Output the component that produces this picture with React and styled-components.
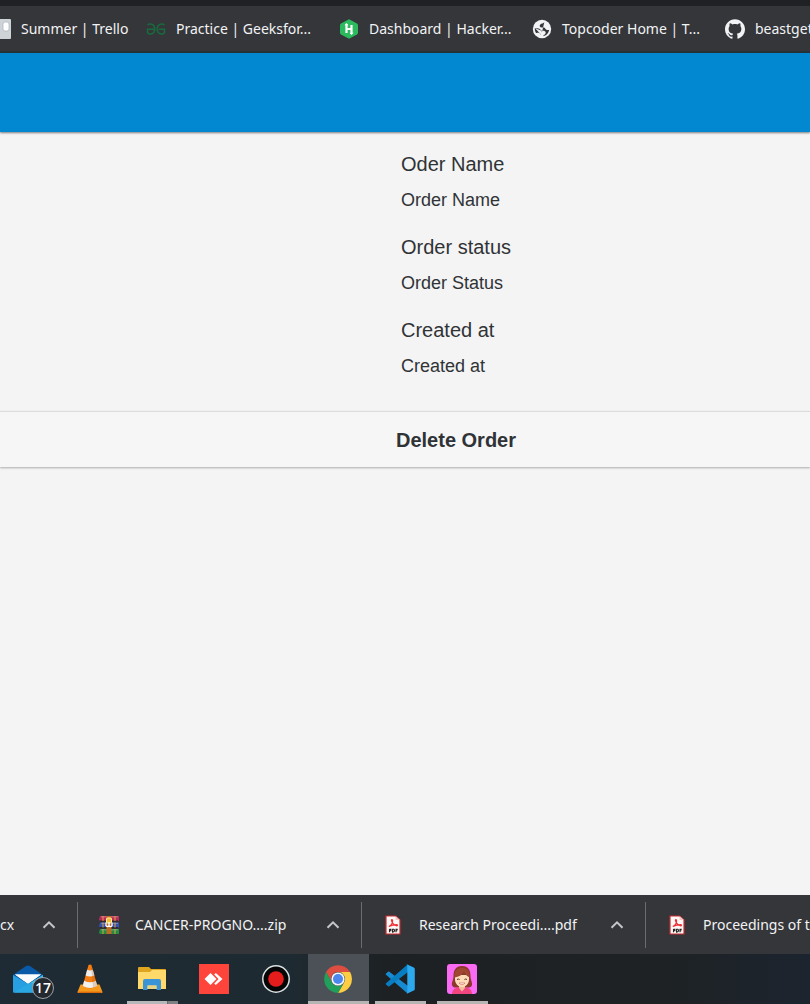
import React from "react";
import styled, { createGlobalStyle } from "styled-components";
import { SiGithub } from "react-icons/si";

const GlobalStyle = createGlobalStyle`
  * { box-sizing: border-box; }
  body { margin: 0; background: #f4f4f4; }
  button { border: 0; padding: 0; margin: 0; background: none; font: inherit; color: inherit; cursor: pointer; }
  svg { display: block; }
`;

const Screen = styled.div`
  display: flex;
  flex-direction: column;
  min-height: 100vh;
  overflow: hidden;
  background: #f4f4f4;
  font-family: "Liberation Sans", Arial, sans-serif;
  color: #303336;
`;

const BookmarkBar = styled.nav`
  display: flex;
  align-items: center;
  height: 53px;
  border-top: 6px solid #202124;
  border-bottom: 2px solid #263236;
  background: #35363a;
  overflow: hidden;
  font-family: "Noto Sans", "Open Sans", sans-serif;
`;

const Bookmark = styled.a`
  flex: 0 0 ${(p) => (p.$short ? 155 : 193)}px;
  display: flex;
  align-items: center;
  gap: 10px;
  color: #f1f3f4;
  font-size: 14px;
  line-height: 20px;
  white-space: nowrap;
  text-decoration: none;
  &:first-child { margin-left: -9px; }
  svg { flex: none; }
`;

const AppHeader = styled.header`
  height: 79px;
  flex: none;
  background: #0288d1;
  box-shadow: 0 1px 2px rgba(0, 0, 0, 0.5);
`;

const Page = styled.main`
  flex: 1;
`;

const Details = styled.dl`
  display: flex;
  flex-direction: column;
  gap: 24px;
  margin: 0;
  padding: 20px 16px 34px calc(50% - 4px);
`;

const Field = styled.div`
  display: flex;
  flex-direction: column;
  gap: 13px;
`;

const FieldName = styled.dt`
  font-size: 20px;
  line-height: 24px;
`;

const FieldValue = styled.dd`
  margin: 0;
  font-size: 18px;
  line-height: 22px;
`;

const DeleteButton = styled.button`
  && {
    display: block;
    width: 100%;
    height: 56px;
    padding-left: 102px;
    border-top: 1px solid #dcdcdc;
    background: #f6f6f6;
    box-shadow: 0 1px 2px rgba(0, 0, 0, 0.3);
    font-size: 20px;
    font-weight: 700;
    line-height: 24px;
    text-align: center;
  }
`;

const DownloadBar = styled.section`
  display: flex;
  align-items: center;
  flex: none;
  height: 59px;
  background: #35363a;
  overflow: hidden;
  color: #f1f3f4;
  font-family: "Noto Sans", "Open Sans", sans-serif;
  font-size: 14px;
  line-height: 20px;
`;

const Download = styled.div`
  flex: 0 0 ${(p) => (p.$cut ? 78 : 284)}px;
  display: flex;
  align-items: center;
  gap: 16px;
  height: 46px;
  padding: 0 21px 0 ${(p) => (p.$cut ? 0 : 21)}px;
  border-right: 1px solid #6b6c70;
  white-space: nowrap;
  svg { flex: none; }
`;

const FileName = styled.span`
  flex: 1;
  min-width: 0;
`;

const MenuButton = styled.button`
  width: 14px;
  flex: none;
`;

const Taskbar = styled.footer`
  display: flex;
  flex: none;
  height: 50px;
  background: linear-gradient(90deg, #1e2b34 0%, #1e2a31 36%, #1d2123 48%, #1e2224 82%, #1c242f 100%);
  overflow: hidden;
`;

const Task = styled.button`
  && {
    flex: 0 0 62px;
    height: 50px;
    display: flex;
    flex-direction: column;
    align-items: center;
    padding-top: 10px;
    border-left: 1px solid transparent;
    background: ${(p) => (p.$active ? "#4b5156" : "transparent")};
    background-clip: padding-box;
  }
  &&:first-child { margin-left: -3px; }
`;

const TaskIcon = styled.span`
  position: relative;
  width: 30px;
  height: 30px;
  margin-right: 1px;
`;

const Running = styled.span`
  width: ${(p) => (p.$wide ? "100%" : "51px")};
  height: 3px;
  margin-top: auto;
  background: ${(p) => (p.$stacked ? "linear-gradient(90deg, #b5b7b8 40px, #4c5255 40px, #7d8183 41px)" : "#b7b5b3")};
`;

const Badge = styled.span`
  position: absolute;
  left: 19px;
  top: 13px;
  width: 22px;
  height: 22px;
  border: 1px solid #9aa0a4;
  border-radius: 50%;
  background: #23292e;
  color: #fff;
  font: 600 14px/20px "Open Sans", sans-serif;
  text-align: center;
`;

const TrelloIcon = () => (
  <svg width="20" height="20" viewBox="0 0 20 20">
    <rect width="20" height="20" rx="1" fill="#cdd3d7" />
    <rect x="3" y="3" width="5" height="13" rx="1" fill="#fff" />
    <rect x="12" y="3" width="6" height="9" rx="2" fill="#fff" stroke="#a9b3ba" strokeWidth=".7" />
  </svg>
);

const GeeksIcon = () => (
  <svg width="20" height="20" viewBox="0 0 20 20" fill="none" stroke="#176b3d" strokeWidth="1.5">
    <path d="M1.500 6C4 4 8.800 5 8.800 10S3.500 16.500 1.500 13.500V10.300H9" />
    <path d="M18.500 6C16 4 11.200 5 11.200 10s5.300 6.500 7.300 3.500v-3.200H13" />
  </svg>
);

const HackerRankIcon = () => (
  <svg width="20" height="20" viewBox="0 0 20 20">
    <path d="M10 0.3L18 4.500Q19 5.200 19 6.200V13.800Q19 14.800 18 15.500L10 19.700 2 15.500Q1 14.800 1 13.800V6.200Q1 5.200 2 4.500Z" fill="#2cba5e" />
    <path d="M7.500 5.200v8.800M12.500 6v8.800M7.500 10h5" stroke="#fff" strokeWidth="2.200" />
    <path d="M5.500 6.200L7.500 4 9.500 6.200ZM10.500 13.800L12.500 16 14.500 13.800Z" fill="#fff" />
  </svg>
);

const GlobeIcon = () => (
  <svg width="20" height="20" viewBox="0 0 20 20">
    <circle cx="10" cy="10" r="9.200" fill="#f1f3f4" />
    <path d="M12.300 3.200C11.300 4.500 9.500 4.200 8.300 5.500 7 7 8 8.400 9.500 8.500l2.500.1c1.500.3 1.200 2.200 3 2.400l2.200.1c-.6 3.400-3 5.700-6.200 6.200.1-1.200 2.600-1.700 2.700-3.500 0-1.500-1.300-2-2.700-2l-1.500-.1C8.300 10 7.200 9.300 5.400 9.200L2.800 9c-.1 2 .3 3.600 1.200 4.900 1 .3 2.200-.4 3.400.2.8.4 1 1.500 1.900 2" fill="#35363a" />
    <path d="M2.800 9L9.500 11.700 11 17.300 9.300 16.100Q6 12 2.800 9Z" fill="#f1f3f4" />
  </svg>
);

const ZipIcon = () => (
  <svg width="20" height="20" viewBox="0 0 20 20">
    <path d="M1 1h19v5H1L0 4.5Z" fill="#b92c58" />
    <path d="M1 7.5h19v5H1L0 11Z" fill="#3651ae" />
    <path d="M1 14h19v5H1L0 17.5Z" fill="#238c40" />
    <path d="M1 6h18M1 12.7h18" stroke="#262326" />
    <path d="M2 1.800h17M2 8.300h17M2 14.800h17" stroke="#fff" strokeOpacity=".4" strokeWidth=".8" />
    <path d="M4 1v5M4 7.500v5M4 14v5M16 1v5M16 7.500v5M16 14v5" stroke="#dca348" />
    <path d="M7.500 1h5v18h-5z" fill="#bd6c22" />
    <rect x="7.500" y="3" width="5" height="5" rx="1" fill="#f7bd36" stroke="#fff1a5" />
    <path d="M7 7.500v3.200q1.500 2 3 0 1.500 2 3 0V7.500M10 7v4" fill="none" stroke="#fff" strokeWidth="1.300" />
  </svg>
);

const PdfIcon = () => (
  <svg width="20" height="20" viewBox="0 0 20 20">
    <path d="M3 1h9.500L17 5v14H3Z" fill="#fff8f5" stroke="#c92a32" strokeWidth="1.200" />
    <path d="M12.500 1v4H17" fill="#f3c9c5" />
    <path d="M5.800 11.500c2-1 3.700-3.500 3.800-5.800 0-1.600-1.600-1.300-1 .3.700 2 2.600 4.200 5.300 4.800.9 0 .8-1.200-.3-1.200-2.500 0-5.800.9-7.800 1.900Z" fill="none" stroke="#ef3038" strokeWidth="1.200" />
    <path d="M6.500 14v3.200M6.500 14.400h1.400v1.300H6.500M9.600 14v3.200q2 0 2-1.600t-2-1.600M13 17.200V14.400h1.700M13 15.800h1.400" fill="none" stroke="#222" strokeWidth="1.100" />
  </svg>
);

const ChevronIcon = () => (
  <svg width="14" height="14" viewBox="0 0 14 14" fill="none" stroke="#c5c6c8" strokeWidth="2">
    <path d="M1.500 9.800L7 4.300l5.500 5.500" />
  </svg>
);

const MailIcon = () => (
  <svg width="30" height="30" viewBox="0 0 30 30">
    <path d="M0 11L13 2q2-1.200 4 0l13 9v6H0Z" fill="#0859a8" />
    <path d="M2 10.500h26L15 20Z" fill="#f9fbfc" />
    <path d="M0 11l30 17.500H0Z" fill="#279fe0" />
    <path d="M30 11v17.500H1Z" fill="#3dc4f1" />
    <path d="M1 28.500L18 18l12 10.500Z" fill="#1b91d9" opacity=".55" />
    <path d="M2 10.500h26L15 19.500Z" fill="#f9fbfc" />
  </svg>
);

const ConeIcon = () => (
  <svg width="30" height="30" viewBox="0 0 30 30">
    <path d="M5.500 20.500h19l3 7.500q.2 1-1 1h-23q-1.200 0-1-1Z" fill="#f59a1c" />
    <path d="M3.500 28.300h23" stroke="#dc6a0b" strokeWidth="1.400" />
    <path d="M13.500 1Q15 0 16.500 1L22.300 22Q15 27 7.700 22Z" fill="#f57d12" />
    <path d="M12.200 5.800q2.800 1.400 5.600 0l1.600 5.800q-4.400 2-8.800 0Z" fill="#eceef0" />
    <path d="M9.200 16.700q5.800 3 11.600 0l1.500 5.300q-7.300 4-14.600 0Z" fill="#f2f1ee" />
    <path d="M16 1h.5l5.800 21-4.300 2Z" fill="#a34a00" opacity=".22" />
  </svg>
);

const FolderIcon = () => (
  <svg width="30" height="30" viewBox="0 0 30 30">
    <path d="M1 4q0-1 1-1h10l2 2h14q1 0 1 1V24H1Z" fill="#dfa420" />
    <path d="M1 8h12l2-2h14v19H1Z" fill="#ffd969" />
    <path d="M6 26V17q0-2 2-2h14q2 0 2 2v9h-4.500v-4.500h-9V26Z" fill="#3b94d7" />
    <path d="M10.500 21.500h9V25h-9Z" fill="#e9d483" />
  </svg>
);

const AnyDeskIcon = () => (
  <svg width="30" height="30" viewBox="0 0 30 30">
    <path d="M0 0h30v30H0z" fill="#ff443b" />
    <path d="M5.500 15l6-6 6 6-6 6Z" fill="#fff" />
    <path d="M15.200 10.600l1.600-1.600L23.500 15l-6.700 6-1.600-1.600L19.600 15Z" fill="#fff" />
  </svg>
);

const RecordIcon = () => (
  <svg width="30" height="30" viewBox="0 0 30 30">
    <circle cx="15" cy="15" r="13.200" fill="#050505" stroke="#d9e1e4" strokeWidth="1.500" />
    <circle cx="15" cy="15" r="7.800" fill="#e51c1c" />
  </svg>
);

const ChromeIcon = () => (
  <svg width="30" height="30" viewBox="0 0 30 30">
    <path d="M3 8A14 14 0 0 1 27.100 8H15a7 7 0 0 0-6.100 10.500Z" fill="#de4e40" />
    <path d="M27.100 8A14 14 0 0 1 15 29l6.100-10.500A7 7 0 0 0 15 8Z" fill="#fdcd43" />
    <path d="M15 29A14 14 0 0 1 3 8l5.900 10.500A7 7 0 0 0 21.100 18.500Z" fill="#20a05a" />
    <circle cx="15" cy="15" r="6.600" fill="#f3f5f7" />
    <circle cx="15" cy="15" r="5" fill="#4b87ed" />
  </svg>
);

const CodeIcon = () => (
  <svg width="30" height="30" viewBox="0 0 30 30">
    <path d="M1 9.500l2-1.700q.7-.5 1.400 0L23 22v7.300q-.8-.1-1.300-.6L1 10.800q-.7-.6 0-1.300Z" fill="#178bd1" />
    <path d="M1 20.500l2 1.700q.7.500 1.400 0L23 8V.700q-.8.100-1.300.6L1 19.200q-.7.600 0 1.300Z" fill="#087dc2" />
    <path d="M22.300.5l6.500 3q1 .6 1 1.600v19.800q0 1-1 1.600l-6.500 3q-.6.200-1-.2 1 .4 1-1V1.700q0-1.400-1-1 .4-.4 1-.2Z" fill="#2da9ee" />
  </svg>
);

const PortraitIcon = () => (
  <svg width="30" height="30" viewBox="0 0 30 30">
    <rect width="30" height="30" rx="3" fill="#fa6af3" />
    <path d="M15 2C8.500 2 6.500 6.500 6.500 12c0 4-2 6-1.500 9 .5 2 2 2.500 4 2.500h12c2 0 3.500-.5 4-2.500.5-3-1.500-5-1.500-9C23.500 6.500 21.500 2 15 2Z" fill="#8c382b" />
    <path d="M5 30c.3-5 3-6 7-6.500h6c4 .5 6.700 1.500 7 6.500Z" fill="#f0457f" />
    <path d="M12 20h6v4l-3 3.500-3-3.500Z" fill="#f0bd98" />
    <path d="M8 11h14v4.500c0 4.500-3.500 7.500-7 7.500s-7-3-7-7.500Z" fill="#ffdcb9" />
    <path d="M7.500 13.500C7 7 10 3.500 15 4c5-.5 8 3 7.500 9.500C19.500 12 18 10 17 7.500 15 11 12 13 7.500 13.500Z" fill="#a04733" />
    <path d="M10 15.500q1.300-1 2.600 0M17.400 15.500q1.300-1 2.600 0" fill="none" stroke="#583029" />
    <path d="M12 19h6q-3 3.500-6 0Z" fill="#fff" stroke="#cf5c58" strokeWidth=".6" />
  </svg>
);

const bookmarks = [
  { label: "Summer | Trello", Icon: TrelloIcon, short: true },
  { label: "Practice | Geeksfor...", Icon: GeeksIcon },
  { label: "Dashboard | Hacker...", Icon: HackerRankIcon },
  { label: "Topcoder Home | T...", Icon: GlobeIcon },
  { label: "beastget", Icon: () => <SiGithub size={20} /> },
];

const fields = [
  ["Oder Name", "Order Name"],
  ["Order status", "Order Status"],
  ["Created at", "Created at"],
];

const downloads = [
  { name: "cx", cut: true },
  { name: "CANCER-PROGNO....zip", Icon: ZipIcon },
  { name: "Research Proceedi....pdf", Icon: PdfIcon },
  { name: "Proceedings of t", Icon: PdfIcon },
];

const tasks = [
  { name: "Mail", Icon: MailIcon, badge: 17 },
  { name: "Media player", Icon: ConeIcon },
  { name: "File Explorer", Icon: FolderIcon, running: true, stacked: true },
  { name: "AnyDesk", Icon: AnyDeskIcon },
  { name: "Recorder", Icon: RecordIcon },
  { name: "Chrome", Icon: ChromeIcon, running: true, active: true },
  { name: "Visual Studio Code", Icon: CodeIcon, running: true },
  { name: "Assistant", Icon: PortraitIcon, running: true },
];

export default function App() {
  return (
    <Screen>
      <GlobalStyle />
      <BookmarkBar aria-label="Bookmarks">
        {bookmarks.map(({ label, Icon, short }) => (
          <Bookmark key={label} href="#" $short={short}>
            <Icon />
            <span>{label}</span>
          </Bookmark>
        ))}
      </BookmarkBar>
      <AppHeader />
      <Page>
        <Details>
          {fields.map(([name, value]) => (
            <Field key={name}>
              <FieldName>{name}</FieldName>
              <FieldValue>{value}</FieldValue>
            </Field>
          ))}
        </Details>
        <DeleteButton type="button">Delete Order</DeleteButton>
      </Page>
      <DownloadBar aria-label="Downloads">
        {downloads.map(({ name, Icon, cut }) => (
          <Download key={name} $cut={cut}>
            {Icon && <Icon />}
            <FileName>{name}</FileName>
            <MenuButton type="button" aria-label={`Options for ${name}`}>
              <ChevronIcon />
            </MenuButton>
          </Download>
        ))}
      </DownloadBar>
      <Taskbar>
        {tasks.map(({ name, Icon, badge, running, stacked, active }) => (
          <Task key={name} type="button" aria-label={name} $active={active}>
            <TaskIcon>
              <Icon />
              {badge && <Badge>{badge}</Badge>}
            </TaskIcon>
            {running && <Running $wide={active} $stacked={stacked} />}
          </Task>
        ))}
      </Taskbar>
    </Screen>
  );
}
